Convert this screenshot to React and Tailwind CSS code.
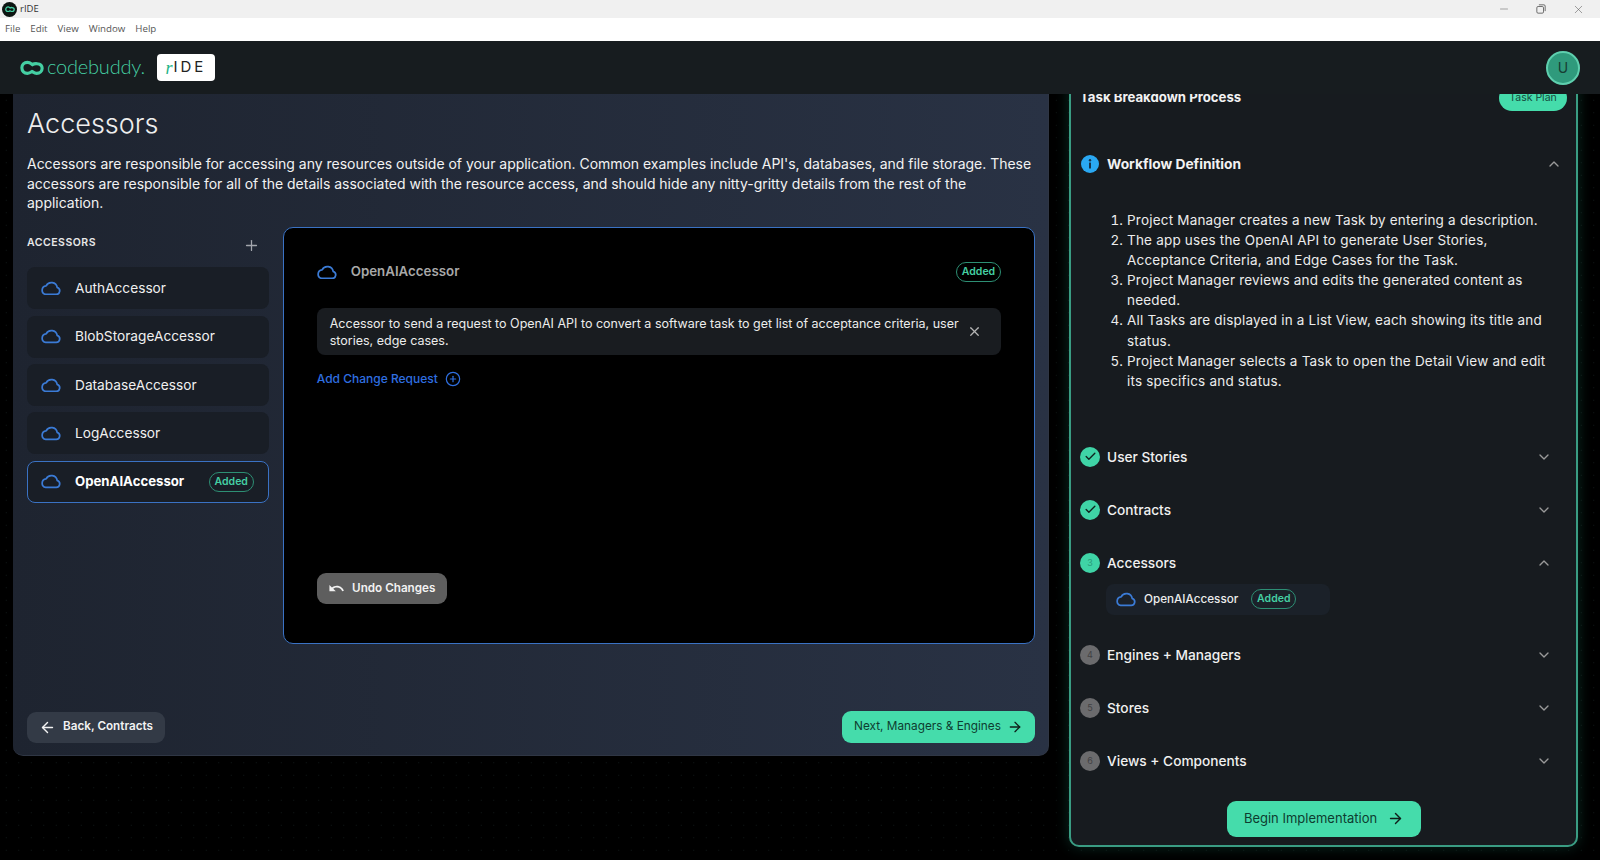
import React from 'react';
import { ArrowLeft, ArrowRight, Check, ChevronDown, ChevronUp, CirclePlus, Minus, Plus, X } from 'lucide-react';
import { MdUndo } from 'react-icons/md';

const accessors = ['AuthAccessor', 'BlobStorageAccessor', 'DatabaseAccessor', 'LogAccessor'];

const workflow = [
    'Project Manager creates a new Task by entering a description.',
    'The app uses the OpenAI API to generate User Stories, Acceptance Criteria, and Edge Cases for the Task.',
    'Project Manager reviews and edits the generated content as needed.',
    'All Tasks are displayed in a List View, each showing its title and status.',
    'Project Manager selects a Task to open the Detail View and edit its specifics and status.',
];

const CloudIcon = ({ className }) => (
    <svg viewBox="0 0 22 16" fill="none" stroke="#3b7bd6" strokeWidth="1.9" strokeLinejoin="round" className={className}>
        <path d="M5.2 14.8h11.6a3.9 3.9 0 0 0 1.1-7.6A6.6 6.6 0 0 0 5.6 5.3a4.8 4.8 0 0 0-.4 9.5z" />
    </svg>
);

const LoopLogo = ({ className, color }) => (
    <svg viewBox="0 0 26 17" fill="none" stroke={color} strokeWidth="3.4" className={className}>
        <path d="M8 2.5C11 2.5 12 4 13.5 5C15 4 16.5 3.8 18.5 4C22 4.3 24 6.5 24 9C24 12 21.5 14.5 18 14.5C15.5 14.5 14.5 13.2 13 12.5C11.5 13.5 10 14.5 8 14.5C4.5 14.5 2 12 2 8.5C2 5 4.5 2.5 8 2.5Z" />
    </svg>
);

const AddedBadge = () => (
    <span className="flex h-[20px] w-[45px] items-center justify-center rounded-full border border-[#2d8f74] text-[10.5px] font-semibold text-[#45cfa3]">
        Added
    </span>
);

const StepRow = ({ label, step, done, open }) => (
    <div className="mb-[11px] flex h-[42px] items-center pr-[17px]">
        {done ? (
            <span className="flex h-[20px] w-[20px] items-center justify-center rounded-full bg-[#3fd4a6]">
                <Check size={13} strokeWidth={2.5} className="text-[#10231e]" />
            </span>
        ) : (
            <span className={`flex h-[20px] w-[20px] items-center justify-center rounded-full text-[9px] ${open ? 'bg-[#3fd4a6] text-[#2b9c7b]' : 'bg-[#6b6b6d] text-[#414143]'}`}>
                {step}
            </span>
        )}
        <span className="ml-[7px] text-[13.7px] font-medium text-[#f0f0f0]">{label}</span>
        {open ? (
            <ChevronUp size={16} className="ml-auto text-[#9a9a9a]" />
        ) : (
            <ChevronDown size={16} className="ml-auto text-[#9a9a9a]" />
        )}
    </div>
);

const App = () => {
    return (
        <div className="flex h-screen flex-col overflow-hidden bg-black font-['Inter',sans-serif]">
            {/* Window chrome */}
            <div className="flex h-[18px] items-center bg-[#f0f0f0] pl-[2px]">
                <span className="flex h-[15px] w-[15px] items-center justify-center rounded-full bg-[#0d1512]">
                    <LoopLogo className="w-[10px]" color="#45cfa3" />
                </span>
                <span className="ml-[3px] font-['Open_Sans',sans-serif] text-[9.5px] text-[#333]">rIDE</span>
                <div className="ml-auto flex items-center gap-[26px] pr-[15px] text-[#555]">
                    <Minus size={12} strokeWidth={1} />
                    <svg viewBox="0 0 12 12" fill="none" stroke="currentColor" className="h-[10px] w-[10px]">
                        <rect x="1" y="3" width="8" height="8" rx="1.5" />
                        <path d="M3.5 1h6A1.5 1.5 0 0 1 11 2.5v6" />
                    </svg>
                    <X size={13} strokeWidth={1} />
                </div>
            </div>
            <div className="flex h-[23px] items-center gap-[10px] bg-white pl-[5px] font-['Open_Sans',sans-serif] text-[9.7px] text-[#555]">
                <span>File</span>
                <span>Edit</span>
                <span>View</span>
                <span>Window</span>
                <span>Help</span>
            </div>

            {/* App header */}
            <header className="relative z-10 flex h-[53px] items-center justify-between bg-[#171c1f] pl-[20px] pr-[20px]">
                <div className="flex items-center">
                    <LoopLogo className="w-[24px]" color="#45cfa3" />
                    <span className="mb-[3px] ml-[3px] font-['Lato',sans-serif] text-[20px] font-light leading-none tracking-[-0.2px] text-[#45cfa3]">codebuddy.</span>
                    <span className="ml-[12px] flex h-[27px] w-[58px] items-center justify-center rounded-[4px] bg-white text-[15px] tracking-[3px] text-[#222]">
                        <span className="font-['Liberation_Serif',serif] text-[18px] italic leading-none tracking-[1px] text-[#1fb587]">r</span>IDE
                    </span>
                </div>
                <div className="flex h-[34px] w-[34px] items-center justify-center rounded-full border-2 border-[#5ecfae] bg-[#2f9a7c] text-[14px] text-[#173d33]">
                    U
                </div>
            </header>

            <div className="flex flex-1 items-start overflow-hidden bg-black bg-[radial-gradient(#121b1b_0.6px,transparent_0.8px)] bg-[size:12.5px_12.5px] pl-[13px]">
                {/* Main panel */}
                <main className="flex h-[662px] w-[1036px] flex-col rounded-b-[10px] border-b border-r border-[#2f3644] bg-gradient-to-r from-[#1e2430] to-[#293244] pl-[14px] pr-[13px] pt-[12px]">
                    <h1 className="text-[27px] font-light leading-[36px] text-[#eeeeee]">Accessors</h1>
                    <p className="mt-[12px] text-[14px] leading-[19.7px] tracking-[-0.02px] text-[#f2f2f2]">
                        Accessors are responsible for accessing any resources outside of your application. Common examples include API's, databases, and file storage. These accessors are responsible for all of the details associated with the resource access, and should hide any nitty-gritty details from the rest of the application.
                    </p>

                    <div className="mt-[14px] flex gap-[14px]">
                        <div className="w-[242px]">
                            <div className="flex h-[40px] items-start justify-between pr-[9px] pt-[9px]">
                                <span className="text-[10.5px] font-semibold leading-[13px] tracking-[0.5px] text-[#e8e8e8]">ACCESSORS</span>
                                <Plus size={17} strokeWidth={1.8} className="mt-[1px] text-[#a3a6ad]" />
                            </div>
                            <div className="flex flex-col gap-[6.4px]">
                                {accessors.map((name) => (
                                    <div key={name} className="flex h-[42px] items-center rounded-lg bg-[#191e26] pl-[14px]">
                                        <CloudIcon className="w-[20px]" />
                                        <span className="ml-[14px] text-[13.7px] text-[#f0f0f0]">{name}</span>
                                    </div>
                                ))}
                                <div className="flex h-[42px] items-center rounded-lg border border-[#3a72c4] bg-[#191e26] pl-[13px] pr-[14px]">
                                    <CloudIcon className="w-[20px]" />
                                    <span className="ml-[14px] text-[13.2px] font-bold text-white">OpenAIAccessor</span>
                                    <span className="ml-auto"><AddedBadge /></span>
                                </div>
                            </div>
                        </div>

                        {/* Detail */}
                        <section className="flex h-[417px] w-[753px] flex-col rounded-[10px] border border-[#3a72c4] bg-black px-[33px] pb-[39px] pt-[33px]">
                            <div className="flex h-[22px] items-center">
                                <CloudIcon className="w-[20px]" />
                                <span className="ml-[14px] text-[13.3px] font-semibold text-[#a8a8a8]">OpenAIAccessor</span>
                                <span className="ml-auto"><AddedBadge /></span>
                            </div>
                            <div className="mt-[25px] flex h-[47px] items-center rounded-lg bg-[#191c20] pl-[13px] pr-[19px]">
                                <p className="w-[632px] text-[12.5px] leading-[17px] text-[#ececec]">
                                    Accessor to send a request to OpenAI API to convert a software task to get list of acceptance criteria, user stories, edge cases.
                                </p>
                                <X size={15} className="ml-auto text-[#b5b5b5]" />
                            </div>
                            <button className="mt-[15px] flex items-center self-start text-[12px] font-medium text-[#2f6fe0]">
                                Add Change Request
                                <CirclePlus size={16} strokeWidth={1.8} className="ml-[7px]" />
                            </button>
                            <button className="mt-auto flex h-[31px] w-[130px] items-center justify-center gap-[7px] rounded-[9px] bg-[#5e5e5e] text-[11.7px] font-semibold text-[#f2f2f2]">
                                <MdUndo size={17} />
                                Undo Changes
                            </button>
                        </section>
                    </div>

                    <div className="mt-[67px] flex items-center justify-between">
                        <button className="flex h-[31px] w-[138px] items-center justify-center gap-[7px] rounded-[9px] bg-[#333a46] text-[11.7px] font-semibold text-[#f2f2f2]">
                            <ArrowLeft size={17} />
                            Back, Contracts
                        </button>
                        <button className="flex h-[32px] w-[193px] items-center justify-center gap-[6px] rounded-[9px] bg-[#45dcab] text-[11.8px] text-[#0e3d30]">
                            Next, Managers &amp; Engines
                            <ArrowRight size={16} className="text-[#0f1f1a]" />
                        </button>
                    </div>
                </main>

                {/* Task plan panel, scrolled past its top */}
                <aside className="ml-[20px] mt-[-30px] flex h-[783px] w-[509px] flex-col rounded-[10px] border-2 border-[#3a9d83] bg-[#171b1f] pl-[9px] pr-[7px] pt-[19px] shadow-[0_0_14px_rgba(40,170,140,0.25)]">
                    <div className="flex h-[26px] items-center justify-between">
                        <span className="text-[13.2px] font-bold text-[#f2f2f2]">Task Breakdown Process</span>
                        <span className="mr-[2px] flex h-[26px] w-[68px] items-center justify-center rounded-[14px] bg-[#45dcab] text-[10.5px] text-[#14493b]">Task Plan</span>
                    </div>
                    <div className="mt-[41px] flex h-[24px] items-center pr-[7px]">
                        <svg viewBox="0 0 18 18" className="ml-[1px] h-[18px] w-[18px]">
                            <circle cx="9" cy="9" r="9" fill="#2aa8f2" />
                            <circle cx="9" cy="5.2" r="1.2" fill="#17324a" />
                            <rect x="8" y="7.5" width="2" height="6" rx="0.5" fill="#17324a" />
                        </svg>
                        <span className="ml-[8px] text-[13.8px] font-bold text-[#f2f2f2]">Workflow Definition</span>
                        <ChevronUp size={16} className="ml-auto text-[#9a9a9a]" />
                    </div>
                    <ol className="ml-[47px] mr-[14px] mt-[34px] list-decimal text-[13.5px] leading-[20.1px] tracking-[0.2px] text-[#ececec]">
                        {workflow.map((line) => (
                            <li key={line}>{line}</li>
                        ))}
                    </ol>
                    <div className="mt-[45px]">
                        <StepRow label="User Stories" done />
                        <StepRow label="Contracts" done />
                        <div className="mb-[-11px]">
                            <StepRow label="Accessors" step={3} open />
                        </div>
                        <div className="ml-[26px] flex h-[31px] w-[224px] items-center rounded-lg bg-[#1b2129] pl-[10px]">
                            <CloudIcon className="w-[20px]" />
                            <span className="ml-[8px] text-[11.7px] font-medium text-[#ececec]">OpenAIAccessor</span>
                            <span className="ml-[13px]"><AddedBadge /></span>
                        </div>
                        <div className="mt-[19px]">
                            <StepRow label="Engines + Managers" step={4} />
                            <StepRow label="Stores" step={5} />
                            <StepRow label="Views + Components" step={6} />
                        </div>
                    </div>
                    <button className="ml-[147px] mt-[8px] flex h-[36px] w-[194px] items-center justify-center gap-[10px] rounded-[9px] bg-[#45dcab] text-[13px] text-[#0e3d30]">
                        Begin Implementation
                        <ArrowRight size={17} className="text-[#0f1f1a]" />
                    </button>
                </aside>
            </div>
        </div>
    );
};

export default App;
